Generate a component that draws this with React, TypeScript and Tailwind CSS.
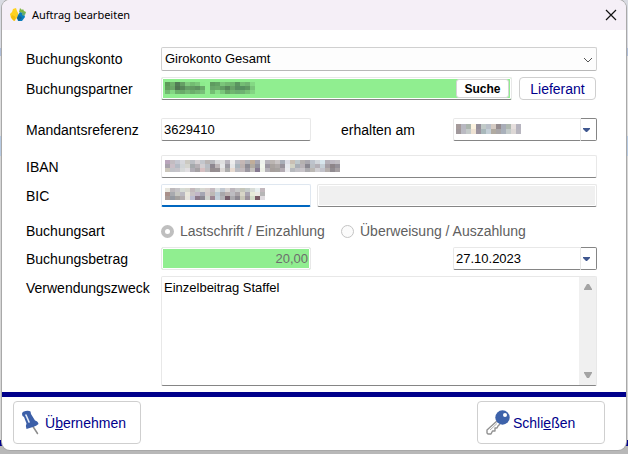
import { useState } from 'react'
import type { ReactNode } from 'react'
import clsx from 'clsx'

const fieldBorder = 'border border-[#e8e8e8] border-b-[#858585] rounded-[2px]'

// colour rows for the redacted values, one entry per block
const partnerBlocks = [
  ['#5d9a58', '#6db06a', '#527d56', '#66a065', '#7fca7d', '#74bd73', '#7bc87a', '#8deb8d', '#90ee90', '#5f9b60', '#62a364', '#7bc57a', '#73b972', '#6fb66f', '#5b9660', '#74bd74', '#70b472', '#84d984'],
  ['#639e5e', '#6aa868', '#4f7551', '#578759', '#659f66', '#629a62', '#5e9260', '#69ab69', '#90ee90', '#68a76a', '#6bab6a', '#629e64', '#57875a', '#67a367', '#588e60', '#569060', '#5d9861', '#79c67a'],
  ['#72b971', '#83d683', '#6bb06b', '#69aa69', '#73b973', '#6bae6b', '#72b772', '#77bf78', '#90ee90', '#73bf73', '#88e088', '#79c77a', '#66a766', '#70b56f', '#6bae70', '#6eb272', '#77c377', '#83d583'],
]
const ibanBlocks = [
  ['#b9a5bb', '#c2bcc1', '#c4c6d0', '#d6d7dc', '#cbc9c1', '#bcbec4', '#d5d0d3', '#c3c6cc', '#b9b4b3', '#b6b7bc', '#d8d9db', '#dfdfdf', '#b8b4bd', '#ededed', '#bdbec7', '#c5b7b5', '#b1b1b7', '#c0ad99', '#a6a5b1', '#eef2ed', '#b6b3bb', '#bbb5b2', '#c9c4c4', '#a8adb8', '#dddde6', '#c9bfb4', '#bec8cc', '#b5b1b0', '#aaa8af', '#bdc3cc', '#d2d7dc', '#d7e6ed', '#b5b1b9', '#bdb9c2', '#c1bec3'],
  ['#a8a2ab', '#cbbfc7', '#b5bbc5', '#d0d4d7', '#d5d5cf', '#a5a9ac', '#b6b0b5', '#d2ced1', '#b9bdc4', '#8d8790', '#beb7b9', '#e6e7e8', '#9d9ba3', '#e5e6e7', '#aab5bd', '#bcb1af', '#8d8b94', '#b1aaa0', '#93939e', '#f2f7ed', '#9c98a2', '#a9a39f', '#b0aaa9', '#98929c', '#e6e8ee', '#d2d3c5', '#a9afb7', '#b9b3b7', '#898790', '#babfc4', '#b4b0b7', '#c6d0d7', '#a59fa5', '#8d8589', '#959199'],
  ['#cbc6bb', '#c2c3c9', '#c6c4ca', '#d6d9d9', '#e1dfe2', '#b1aeb6', '#a5a1a4', '#d6bfc1', '#bdbcbf', '#958d90', '#968f92', '#ddd9d7', '#acacac', '#e8dbd1', '#bbbbc1', '#c2babd', '#9b97a0', '#c3c0bd', '#857990', '#eef1e8', '#b4b1b7', '#a69f9c', '#a6a29f', '#b3abb3', '#ebebef', '#b6b9bd', '#c3c2c7', '#c8c4c9', '#acabaf', '#bbb8b4', '#d0cfd3', '#c2c3cb', '#b5afad', '#918c91', '#a6a0a3'],
]
const bicBlocks = [
  ['#e8e7df', '#bdb9bc', '#c6c4c7', '#d6dbd5', '#d8d8cf', '#c3b9bc', '#c7cac9', '#d7d8d2', '#d8d1ce', '#c5bbc1', '#dce1e1', '#c3c9d1', '#dbd8d6', '#bdb7bd', '#c8c8c9', '#c5c6ba', '#c6ccca', '#d9ddd8', '#e8efef', '#c2b8bd'],
  ['#a9908a', '#a8aaaf', '#c6c6c1', '#bbbac2', '#e9e7db', '#c8c2c4', '#c2b6c7', '#a5a6b3', '#d4ccca', '#bdb9b5', '#bdcbd5', '#a8a7aa', '#bab0af', '#bdbcc1', '#aaa4a8', '#d8d6c7', '#aaa5b1', '#e7ebd9', '#ebe8e3', '#b6b6b6'],
  ['#a89a96', '#9499a1', '#a4a19f', '#b2acae', '#e7e4dd', '#bcbcd0', '#8b7889', '#8b8993', '#cfd3cd', '#9b8692', '#c3d0da', '#b2b2b5', '#745c69', '#aaa9ad', '#8c8790', '#c8c7b8', '#9b929c', '#d2dcc9', '#795c66', '#e0dce0'],
]
const dateBlocks = [
  ['#a69b9b', '#b8b8c1', '#acb6ae', '#fbf2df', '#958f9a', '#c1cac8', '#bac0c9', '#d5cbc3', '#958c8f', '#a9adb8', '#b0b9b1', '#e6dfdd', '#b6b4bf'],
  ['#a1999c', '#babac2', '#c5cbca', '#eee2d3', '#9c949f', '#a9b8bb', '#c4cfd7', '#b0aaa1', '#a9a6a8', '#a9b0ba', '#c4cbca', '#ddd8d6', '#b8b6bf'],
]

function Mosaic({ rows, height }: { rows: string[][]; height: number }) {
  const cell = 5
  return (
    <span className="pointer-events-none absolute inset-y-0 left-[3px] flex items-center pb-0.5">
      <svg
        width={rows[0].length * cell}
        height={rows.length * height}
        shapeRendering="crispEdges"
        aria-hidden="true"
      >
        {rows.map((row, y) =>
          row.map((fill, x) => (
            <rect key={`${x}-${y}`} x={x * cell} y={y * height} width={cell} height={height} fill={fill} />
          ))
        )}
      </svg>
    </span>
  )
}

function Row({ label, id, className, children }: { label: string; id: string; className?: string; children: ReactNode }) {
  return (
    <div className={clsx('flex', className)}>
      <label htmlFor={id} className="w-[135px] shrink-0 text-sm leading-6">
        {label}
      </label>
      <div className="flex min-w-0 flex-1">{children}</div>
    </div>
  )
}

function DateField({ id, value, onChange, children }: { id: string; value: string; onChange?: (v: string) => void; children?: ReactNode }) {
  return (
    <div className="relative ml-auto flex h-[23px] w-36">
      <input
        id={id}
        value={value}
        readOnly={!onChange}
        onChange={(e) => onChange?.(e.target.value)}
        className="min-w-0 flex-1 rounded-l-[2px] border border-[#e8e8e8] border-b-[#858585] px-0.5 outline-none"
      />
      {children}
      <button type="button" aria-label="Kalender öffnen" className="flex w-4 items-center justify-start rounded-r-[2px] border border-l-0 border-[#858585] pl-0.5">
        <svg width="8" height="4" viewBox="0 0 8 4" fill="#3f578f">
          <path d="M0 0h7v1L4 4H3L0 1z" />
        </svg>
      </button>
    </div>
  )
}

function AppLogo() {
  return (
    <svg width="16" height="14" viewBox="0 0 16 14" aria-hidden="true">
      <path d="M3 1l3-1 1 3 1 2-1 4-3 4-3-3-1-4 2-2z" fill="#ffd21f" />
      <path d="M2 7l4 2-1 4-2-1-2-3z" fill="#f3bd0d" />
      <path d="M10 0l2 2 1-1 1 2 2 1-1 3-3-2-3-1z" fill="#7fb742" />
      <path d="M6 4l2 1 1 4-2 2-2-2z" fill="#f7cf2c" />
      <path d="M8 7l2-3 4 2 1 3-3 4H8l-1-3z" fill="#087dbd" />
      <path d="M9 7l3 3-3 3-2-3z" fill="#13628f" />
      <path d="M12 4l3 1-1 3-2-1z" fill="#5ea978" />
    </svg>
  )
}

function PinIcon() {
  return (
    <svg width="18" height="26" viewBox="0 0 18 26" aria-hidden="true">
      <path d="M10 15l5.500 8.500" stroke="#8c8c8c" strokeWidth="1.500" strokeLinecap="round" />
      <path d="M0 4Q0 1.500 3.500 1T8.500 1.500L9 4l4 6.500Q16 11 16.500 14Q14.500 16 11 17T4.500 19Q3 16.500 4.500 13.500L2 7 .5 6z" fill="#3c5fa8" />
      <path d="M4 5l3 7" stroke="#e4ecf8" strokeWidth="1.600" strokeLinecap="round" />
    </svg>
  )
}

function KeyIcon() {
  return (
    <svg width="24" height="25" viewBox="0 0 24 25" aria-hidden="true">
      <path d="M11 11L1 20v3l1 1h3l1.500-3H9v-3h2l1-2 2-2" fill="#fff" stroke="#929292" strokeWidth="1.400" strokeLinejoin="round" />
      <path d="M11 13.500L4 20" stroke="#b0b0b0" />
      <circle cx="16.500" cy="7.500" r="7.200" fill="#3d62aa" />
      <circle cx="19" cy="5" r="2" fill="#fff" />
    </svg>
  )
}

const actionButton =
  'flex h-[43px] w-32 items-center rounded-[4px] border border-[#cfcfcf] bg-white pl-2 text-sm text-[#00008b]'

export default function App() {
  const [reference, setReference] = useState('3629410')
  const [date, setDate] = useState('27.10.2023')
  const [purpose, setPurpose] = useState('Einzelbeitrag Staffel')

  return (
    <div className="min-h-screen bg-[linear-gradient(#d9dbe2_0_48px,#aebdd8_48px_56px,#dedede_56px_136px,#b7cae2_136px_156px,#d6d6d6_156px_440px,#00008b_440px_446px,#b8b8b8_446px)] px-0.5 pb-1 font-['Liberation_Sans',Arial,sans-serif] text-[13px] text-black">
      <main className="overflow-hidden rounded-lg bg-white shadow-[0_0_0_1px_#a9a9a9]">
        <header className="flex h-[30px] items-center bg-[#f5eff7] pl-2 pr-[9px]">
          <AppLogo />
          <h1 className="ml-1.5 flex-1 font-['Noto_Sans','Open_Sans',sans-serif] text-[11px]">Auftrag bearbeiten</h1>
          <button type="button" aria-label="Fenster schließen">
            <svg width="12" height="12" viewBox="0 0 12 12" stroke="#111" strokeWidth="1.200">
              <path d="M1 1l10 10M11 1L1 11" />
            </svg>
          </button>
        </header>

        <form id="auftrag" className="pb-1.5 pl-6 pr-[29px] pt-[17px]" onSubmit={(e) => e.preventDefault()}>
          <Row label="Buchungskonto" id="konto">
            <div className="relative flex-1">
              <select
                id="konto"
                className="block h-6 w-full appearance-none rounded-[2px] border border-[#d0d0d0] border-b-[#b8b8b8] bg-[#fdfdfd] px-[3px] outline-none"
              >
                <option>Girokonto Gesamt</option>
              </select>
              <svg className="pointer-events-none absolute right-1 top-2.5" width="10" height="6" viewBox="0 0 10 6" fill="none" stroke="#555">
                <path d="M1 1l4 4 4-4" />
              </svg>
            </div>
          </Row>

          <Row label="Buchungspartner" id="partner" className="mt-1.5">
            <div className={clsx('relative flex h-[23px] flex-1 bg-[#90ee90] shadow-[inset_0_0_0_1px_#fff]', fieldBorder)}>
              <input id="partner" readOnly className="min-w-0 flex-1 bg-transparent px-0.5 outline-none" />
              <Mosaic rows={partnerBlocks} height={4} />
              <button type="button" className="my-px mr-0.5 w-[53px] rounded-[3px] border border-[#d4d4d4] bg-white text-xs font-bold">
                Suche
              </button>
            </div>
            <button type="button" className="ml-[7px] mr-px h-[23px] w-[77px] rounded-[4px] border border-[#cfcfcf] text-sm text-[#00008b]">
              Lieferant
            </button>
          </Row>

          <Row label="Mandantsreferenz" id="referenz" className="mt-[17px]">
            <input
              id="referenz"
              value={reference}
              onChange={(e) => setReference(e.target.value)}
              className={clsx('h-[23px] w-[150px] px-0.5 outline-none', fieldBorder)}
            />
            <label htmlFor="erhalten" className="ml-[30px] text-sm leading-6">
              erhalten am
            </label>
            <DateField id="erhalten" value="">
              <Mosaic rows={dateBlocks} height={5} />
            </DateField>
          </Row>

          <Row label="IBAN" id="iban" className="mt-[13px]">
            <div className={clsx('relative h-[23px] flex-1', fieldBorder)}>
              <input id="iban" readOnly className="block w-full bg-transparent px-0.5 outline-none" />
              <Mosaic rows={ibanBlocks} height={4} />
            </div>
          </Row>

          <Row label="BIC" id="bic" className="mt-[5px]">
            <div className="relative h-[23px] w-[150px] rounded-[2px] border border-b-2 border-[#dfe7f0] border-b-[#0067c0]">
              <input id="bic" readOnly className="block w-full bg-transparent px-0.5 outline-none" />
              <Mosaic rows={bicBlocks} height={4} />
            </div>
            <input
              aria-label="Name der Bank"
              disabled
              className={clsx('ml-1.5 h-[23px] min-w-0 flex-1 bg-[#f0f0f0] shadow-[inset_0_0_0_1px_#fff]', fieldBorder)}
            />
          </Row>

          <fieldset disabled className="mt-[11px] flex h-6 items-center text-sm">
            <legend className="float-left w-[135px]">Buchungsart</legend>
            <label className="flex w-[180px] items-center gap-1.5 text-[#606060]">
              <input type="radio" name="art" defaultChecked className="size-[13px] shrink-0 appearance-none rounded-full border-4 border-[#bfbfbf] bg-white" />
              Lastschrift / Einzahlung
            </label>
            <label className="flex items-center gap-1.5 text-[#606060]">
              <input type="radio" name="art" className="size-[13px] shrink-0 appearance-none rounded-full border border-[#c4c4c4] bg-[#fbfbfb]" />
              Überweisung / Auszahlung
            </label>
          </fieldset>

          <Row label="Buchungsbetrag" id="betrag" className="mt-1">
            <input
              id="betrag"
              defaultValue="20,00"
              disabled
              className="h-[23px] w-[150px] rounded-[2px] border border-[#e8e8e8] bg-[#90ee90] px-0.5 text-right text-[#6d6d6d] shadow-[inset_0_0_0_1px_#fff]"
            />
            <DateField id="datum" value={date} onChange={setDate} />
          </Row>

          <Row label="Verwendungszweck" id="zweck" className="mt-[5px]">
            <div className={clsx('flex h-[110px] flex-1', fieldBorder)}>
              <textarea
                id="zweck"
                value={purpose}
                onChange={(e) => setPurpose(e.target.value)}
                className="min-w-0 flex-1 resize-none overflow-hidden px-0.5 py-[3px] leading-4 outline-none"
              />
              <div className="flex w-[17px] flex-col items-center justify-between bg-[#f0f0f0] py-[7px]">
                <svg width="8" height="6" viewBox="0 0 8 6" fill="#a3a3a3">
                  <path d="M3 0h2l3 5v1H0V5z" />
                </svg>
                <svg width="8" height="6" viewBox="0 0 8 6" fill="#a3a3a3">
                  <path d="M0 0h8v1L5 6H3L0 1z" />
                </svg>
              </div>
            </div>
          </Row>
        </form>

        <footer className="flex justify-between border-t-[5px] border-[#00008b] pb-1.5 pl-[11px] pr-[21px] pt-1">
          <button type="submit" form="auftrag" className={clsx(actionButton, 'gap-[5px]')}>
            <PinIcon />
            <span>
              Ü<u>b</u>ernehmen
            </span>
          </button>
          <button type="button" className={clsx(actionButton, 'gap-[3px]')}>
            <KeyIcon />
            <span>
              Schli<u>e</u>ßen
            </span>
          </button>
        </footer>
      </main>
    </div>
  )
}
